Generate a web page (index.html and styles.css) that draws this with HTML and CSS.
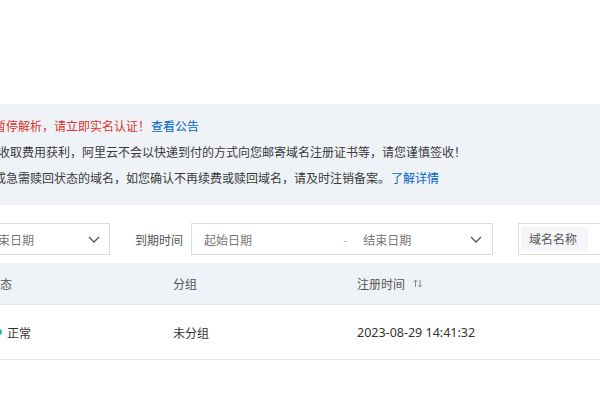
FILE: index.html
```html
<!DOCTYPE html>
<html lang="zh-CN">
<head>
<meta charset="utf-8">
<link rel="stylesheet" href="styles.css">
</head>
<body>
<div class="page">
  <div class="notice">
    <p class="line l1"><span class="red">暂停解析，请立即实名认证！</span><a class="link">查看公告</a></p>
    <p class="line l2">收取费用获利，阿里云不会以快递到付的方式向您邮寄域名注册证书等，请您谨慎签收！</p>
    <p class="line l3">成急需赎回状态的域名，如您确认不再续费或赎回域名，请及时注销备案。<a class="link">了解详情</a></p>
  </div>

  <div class="filters">
    <div class="box select1">
      <span class="ph">结束日期</span>
      <svg class="chev" width="12" height="7" viewBox="0 0 12 7"><path d="M1 1l5 5 5-5" fill="none" stroke="#555" stroke-width="1.3"/></svg>
    </div>
    <span class="label">到期时间</span>
    <div class="box range">
      <span class="ph start">起始日期</span>
      <span class="dash">-</span>
      <span class="ph end">结束日期</span>
      <svg class="chev" width="12" height="7" viewBox="0 0 12 7"><path d="M1 1l5 5 5-5" fill="none" stroke="#555" stroke-width="1.3"/></svg>
    </div>
    <div class="box search">
      <span class="addon">域名名称</span>
    </div>
  </div>

  <div class="table">
    <div class="trow head">
      <div class="cell">状态</div>
      <div class="cell">分组</div>
      <div class="cell">注册时间
        <svg class="sort" width="10" height="9" viewBox="0 0 10 9"><path d="M2.5 8V1M0.8 2.8L2.5 1l1.7 1.8M7 1v7M5.3 6.2L7 8l1.7-1.8" fill="none" stroke="#888" stroke-width="1"/></svg>
      </div>
    </div>
    <div class="trow body">
      <div class="cell"><span class="dot"></span>正常</div>
      <div class="cell">未分组</div>
      <div class="cell date">2023-08-29 14:41:32</div>
    </div>
  </div>
</div>
</body>
</html>
```

FILE: styles.css
```css
html, body {
  margin: 0;
  padding: 0;
  background: #ffffff;
  overflow: hidden;
}
body {
  width: 600px;
  height: 400px;
  font-family: "Noto Sans CJK SC", "Noto Sans", sans-serif;
  font-size: 12px;
  color: #333;
}
.page {
  margin-left: -40px;
  width: 720px;
  padding-top: 104px;
}
.notice {
  background: #eff2f6;
  height: 101px;
  box-sizing: border-box;
  padding: 9px 0 0 34px;
}
.line {
  margin: 0;
  height: 26px;
  line-height: 26px;
  white-space: nowrap;
  color: #3a3a3a;
}
.l2 {
  margin-left: 4px;
}
.red {
  color: #d8362f;
}
.link {
  color: #0064c8;
  margin-left: 1px;
}
.filters {
  margin-top: 18px;
  display: flex;
  align-items: center;
  height: 32px;
}
.filters > * {
  flex-shrink: 0;
}
.box {
  height: 32px;
  box-sizing: border-box;
  border: 1px solid #d9dce1;
  display: flex;
  align-items: center;
  background: #fff;
}
.select1 {
  width: 150px;
  padding: 0 9px 0 25px;
  justify-content: space-between;
}
.ph {
  color: #777;
  white-space: nowrap;
}
.label {
  margin-left: 25px;
  width: 48px;
  color: #555;
  margin-right: 8px;
  white-space: nowrap;
}
.range {
  width: 302px;
  padding: 0 10px 0 12px;
}
.dash {
  margin-left: 91px;
  color: #aaa;
}
.end {
  margin-left: 16px;
}
.range .chev {
  margin-left: auto;
}
.search {
  margin-left: 25px;
  width: 200px;
  padding: 3px 2px;
}
.addon {
  background: #f4f6f9;
  height: 24px;
  line-height: 24px;
  padding: 0 11px 0 8px;
  color: #555;
  white-space: nowrap;
}
.table {
  margin-top: 8px;
}
.trow {
  display: grid;
  grid-template-columns: 185px 184px 1fr;
  padding-left: 28px;
  align-items: center;
  border-bottom: 1px solid #e6e8eb;
}
.head {
  background: #eff2f6;
  height: 42px;
  box-sizing: border-box;
  color: #555;
}
.body {
  height: 55px;
  box-sizing: border-box;
}
.cell {
  display: flex;
  align-items: center;
  white-space: nowrap;
}
.sort {
  margin-left: 8px;
}
.dot {
  flex-shrink: 0;
  width: 6px;
  height: 6px;
  border-radius: 50%;
  background: #1fb6a8;
  margin-left: 8px;
  margin-right: 5px;
}
.date {
  font-family: "Noto Sans", sans-serif;
  font-size: 12.5px;
  color: #333;
}
```
